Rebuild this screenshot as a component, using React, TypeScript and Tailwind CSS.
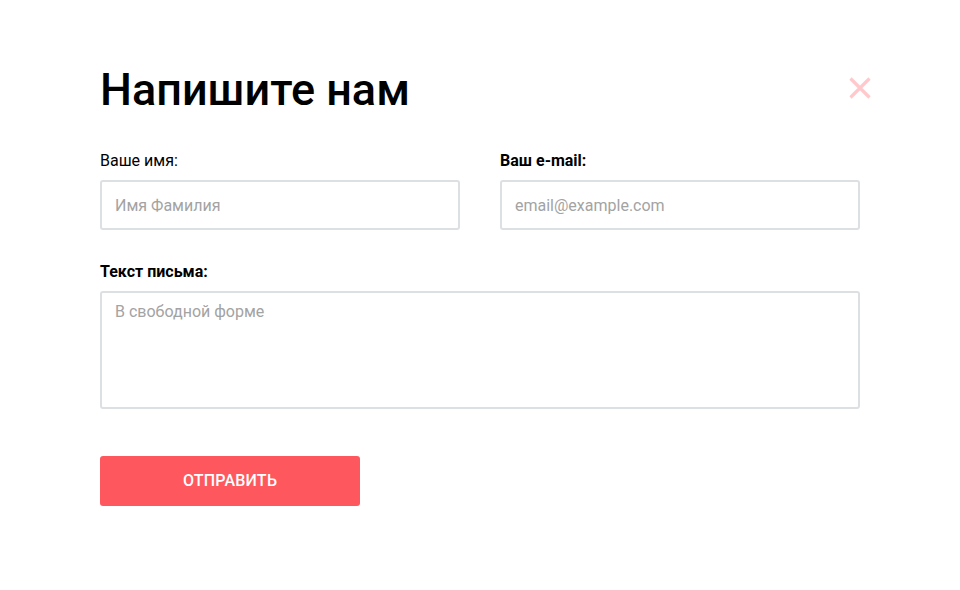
import React from "react";

export default function App() {
  return (
    <div className="w-[960px] h-[590px] bg-white" style={{ fontFamily: "Roboto, 'Noto Sans', sans-serif" }}>
      <div className="px-[100px] pt-[62px]">
        <div className="flex items-start justify-between">
          <h1 className="text-[45px] leading-[56px] font-medium text-black">Напишите нам</h1>
          <button className="mt-[15px] mr-[-11px] w-[22px] h-[22px] flex items-center justify-center" aria-label="close">
            <svg width="22" height="22" viewBox="0 0 22 22">
              <path d="M1.5 1.5 L20.5 20.5 M20.5 1.5 L1.5 20.5" stroke="#ffc9cc" strokeWidth="3.2" strokeLinecap="butt" />
            </svg>
          </button>
        </div>
        <div className="mt-[33px] grid grid-cols-2 gap-x-[40px]">
          <div>
            <label className="block text-[16px] leading-[20px] text-black">Ваше имя:</label>
            <input
              className="mt-[9px] w-full h-[50px] border-2 border-[#dde0e3] rounded-[3px] px-[13px] text-[16px] placeholder:text-[#a3a3a3] outline-none"
              placeholder="Имя Фамилия"
            />
          </div>
          <div>
            <label className="block text-[16px] leading-[20px] font-bold text-black">Ваш e-mail:</label>
            <input
              className="mt-[9px] w-full h-[50px] border-2 border-[#dde0e3] rounded-[3px] px-[13px] text-[16px] placeholder:text-[#a3a3a3] outline-none"
              placeholder="email@example.com"
            />
          </div>
        </div>
        <div className="mt-[32px]">
          <label className="block text-[16px] leading-[20px] font-bold text-black">Текст письма:</label>
          <textarea
            className="mt-[9px] block w-full h-[118px] border-2 border-[#dde0e3] rounded-[3px] px-[13px] pt-[7px] text-[16px] leading-[24px] placeholder:text-[#a3a3a3] outline-none resize-none"
            placeholder="В свободной форме"
          />
        </div>
        <button className="mt-[47px] w-[260px] h-[50px] bg-[#fe585e] rounded-[3px] text-white text-[16px] font-medium uppercase tracking-[0.2px]">
          Отправить
        </button>
      </div>
    </div>
  );
}
